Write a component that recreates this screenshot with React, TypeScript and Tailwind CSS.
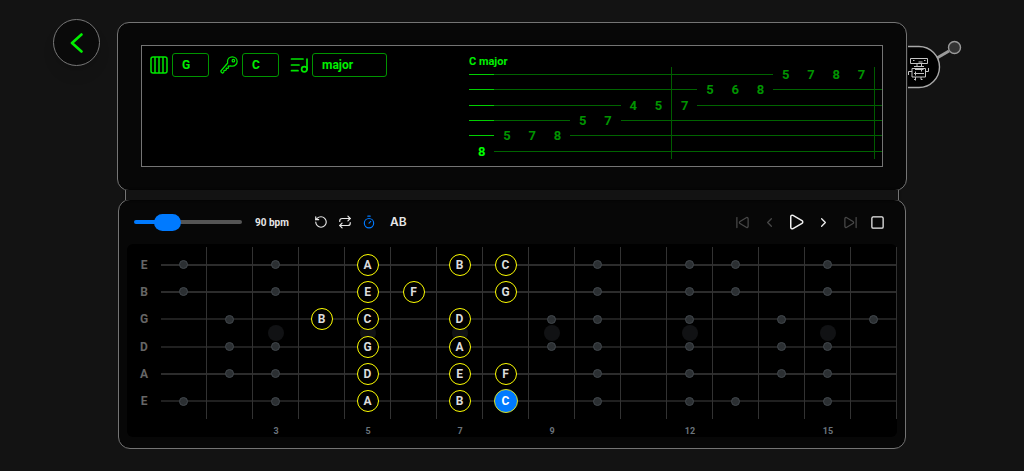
import React, { useState } from 'react';
import {
  ChevronLeft,
  ChevronRight,
  Play,
  Repeat,
  RotateCcw,
  SkipBack,
  SkipForward,
  Square,
  Timer,
} from 'lucide-react';
import { IoKeyOutline } from 'react-icons/io5';

interface GuitarString {
  id: string;
  name: string;
  line: string;
  dots: number[];
  notes: Record<number, string>;
}

const STRINGS: GuitarString[] = [
  { id: 'e1', name: 'E', line: 'h-0.5 bg-[#2c2c2c]', dots: [1, 3, 10, 12, 13, 15], notes: { 5: 'A', 7: 'B', 8: 'C' } },
  { id: 'b2', name: 'B', line: 'h-0.5 bg-[#2c2c2c]', dots: [1, 3, 10, 12, 13, 15], notes: { 5: 'E', 6: 'F', 8: 'G' } },
  { id: 'g3', name: 'G', line: 'h-px bg-[#404040]', dots: [2, 9, 10, 12, 14, 16], notes: { 4: 'B', 5: 'C', 7: 'D' } },
  { id: 'd4', name: 'D', line: 'h-px bg-[#404040]', dots: [2, 3, 9, 10, 12, 14, 15], notes: { 5: 'G', 7: 'A' } },
  { id: 'a5', name: 'A', line: 'h-0.5 bg-[#2c2c2c]', dots: [2, 3, 10, 12, 14, 15], notes: { 5: 'D', 7: 'E', 8: 'F' } },
  { id: 'e6', name: 'E', line: 'h-px bg-[#404040]', dots: [1, 3, 10, 12, 13, 15], notes: { 5: 'A', 7: 'B', 8: 'C' } },
];

const FRETS = Array.from({ length: 16 }, (_, i) => i + 1);
const INLAYS = [3, 5, 7, 9, 12, 15];

// [string row, fret] per step, eight steps to a measure
const MEASURES: [number, number][][] = [
  [[5, 8], [4, 5], [4, 7], [4, 8], [3, 5], [3, 7], [2, 4], [2, 5]],
  [[2, 7], [1, 5], [1, 6], [1, 8], [0, 5], [0, 7], [0, 8], [0, 7]],
];

const ACTIVE = { string: 'e6', fret: 8 };

function FretsIcon() {
  return (
    <svg viewBox="0 0 18 18" className="size-[18px]" fill="none" stroke="currentColor" strokeWidth="1.5">
      <rect x="1" y="1" width="16" height="16" rx="2" />
      <path d="M5 1v16M9 1v16M13 1v16" />
    </svg>
  );
}

function ScaleIcon() {
  return (
    <svg viewBox="0 0 18 18" className="size-[18px]" fill="none" stroke="currentColor" strokeWidth="1.7" strokeLinecap="round" strokeLinejoin="round">
      <path d="M1.5 3h11.5M1.5 9h7.5M1.5 14.7h6.5M17 3v10.3" />
      <ellipse cx="14.3" cy="13.2" rx="2.7" ry="2.6" />
    </svg>
  );
}

function Lever() {
  return (
    <svg viewBox="0 0 58 54" className="mt-[38px] h-[54px] w-[58px]" fill="none" aria-hidden="true">
      <path d="M30 20L42 13" stroke="#9a9a9a" strokeWidth="3" />
      <circle cx="47.5" cy="9.5" r="6" fill="#333" stroke="#9a9a9a" strokeWidth="1.4" />
      <path d="M1 8.5h11a20.5 20.5 0 0 1 0 41H1" fill="#000" stroke="#a8a8a8" strokeWidth="1.4" />
      <g stroke="#c4c4c4" strokeWidth="1">
        <path d="M3.5 20.5h17v5h-17zM6 22.5h1.5M17 22.5h1.5M11.5 24h4" />
        <path d="M10 25.5v3M14.5 25.5v3M7 28.5h10" />
        <path d="M5 30.5h13.5v8.5H5zM8 31.5h8.5M14.5 30.5v3M7 35.5h10M8.5 33.5v4" />
        <path d="M5 33.5H1.5v3.5M18.5 33.5h3v-3.5M8.5 39v3.5M8.5 41.5H7M14 39v2.5h1.5" />
      </g>
    </svg>
  );
}

interface PickerProps {
  id: string;
  label: string;
  icon: React.ReactNode;
  options: string[];
  value: string;
  onChange: (value: string) => void;
  width: string;
}

function Picker({ id, label, icon, options, value, onChange, width }: PickerProps) {
  return (
    <div className="flex items-center gap-1">
      <label htmlFor={id} aria-label={label}>
        {icon}
      </label>
      <select
        id={id}
        value={value}
        onChange={e => onChange(e.target.value)}
        className={`h-6 appearance-none rounded-[3px] border border-[#009400] bg-black pl-[9px] text-xs font-bold text-[#00f000] outline-none ${width}`}
      >
        {options.map(option => (
          <option key={option}>{option}</option>
        ))}
      </select>
    </div>
  );
}

function Tablature({ title }: { title: string }) {
  return (
    <div className="min-w-0 flex-1 overflow-hidden pt-2">
      <div className="h-[13px] text-[11px] leading-[15px] font-bold text-[#00f000]">{title}</div>
      <div className="flex">
        {MEASURES.map((steps, m) => (
          <div key={m} className="grid h-[92px] w-[203px] shrink-0 grid-cols-8 border-r border-[#005c00]">
            {steps.map(([row, fret], step) => {
              const current = m === 0 && step === 0;
              return (
                <div key={step} className="grid grid-rows-6">
                  {STRINGS.map((string, i) => (
                    <div key={string.id} className="flex min-h-0 items-center justify-center">
                      {i === row ? (
                        <span className={`text-[13px] leading-none font-bold ${current ? 'text-[#00ff00]' : 'text-[#009400]'}`}>
                          {fret}
                        </span>
                      ) : (
                        <span className={current ? 'h-px w-full bg-[#00d000]' : 'h-px w-full bg-[#006400]'} />
                      )}
                    </div>
                  ))}
                </div>
              );
            })}
          </div>
        ))}
        <div className="grid flex-1 grid-rows-6">
          {STRINGS.map((string, i) => (
            <div key={string.id} className="flex items-center">
              {i > 0 && <span className="h-px w-full bg-[#006400]" />}
            </div>
          ))}
        </div>
      </div>
    </div>
  );
}

function FretCell({ string, fret }: { string: GuitarString; fret: number }) {
  const note = string.notes[fret];
  const active = string.id === ACTIVE.string && fret === ACTIVE.fret;

  return (
    <div className="relative flex min-h-0 items-center justify-center">
      <span className={`absolute inset-x-0 top-1/2 -translate-y-1/2 ${string.line}`} />
      {note && (
        <span
          className={`relative flex shrink-0 items-center justify-center rounded-full border text-xs font-bold ${
            active ? 'size-6 border-[#d8e020] bg-[#007aff] text-white' : 'size-[22px] border-[#ffff00] bg-black text-[#dcdcdc]'
          }`}
        >
          {note}
        </span>
      )}
      {string.dots.includes(fret) && (
        <span className="relative size-[9px] rounded-full border border-[#41474c] bg-[#2b2f32]" />
      )}
    </div>
  );
}

function Fretboard() {
  return (
    <div className="mx-2 rounded-md bg-black pt-[3px]">
      <div className="flex">
        <div className="grid w-[34px] shrink-0 grid-rows-6 py-1">
          {STRINGS.map(string => (
            <span key={string.id} className="flex items-center justify-center text-xs font-bold text-[#666]">
              {string.name}
            </span>
          ))}
        </div>
        <div className="grid h-[172px] flex-1 grid-cols-16">
          {FRETS.map(fret => (
            <div
              key={fret}
              className="relative grid grid-rows-6 border-r border-[#323232] py-1"
            >
              {INLAYS.includes(fret) && (
                <span className="absolute top-1/2 left-1/2 size-4 -translate-x-1/2 -translate-y-1/2 rounded-full bg-[#111214]" />
              )}
              {STRINGS.map(string => (
                <FretCell key={string.id} string={string} fret={fret} />
              ))}
            </div>
          ))}
        </div>
      </div>
      <div className="grid h-[18px] grid-cols-16 pt-[6px] pl-[34px] text-center text-[9px] leading-3 font-bold text-[#6b747c]">
        {FRETS.map(fret => (
          <span key={fret}>{INLAYS.includes(fret) ? fret : ''}</span>
        ))}
      </div>
    </div>
  );
}

function Transport() {
  const [bpm, setBpm] = useState(90);
  const [min, max] = [40, 240];
  const filled = 12 + ((bpm - min) / (max - min)) * 76;

  return (
    <div className="flex h-11 items-center justify-between pr-[19px] pl-[15px]">
      <div className="flex items-center">
        <input
          id="tempo"
          type="range"
          aria-label="Tempo"
          min={min}
          max={max}
          value={bpm}
          onChange={e => setBpm(Number(e.target.value))}
          style={{ backgroundImage: `linear-gradient(to right, #007aff ${filled}%, #555 ${filled}%)` }}
          className="h-1 w-[108px] appearance-none rounded-full outline-none [&::-webkit-slider-thumb]:h-[17px] [&::-webkit-slider-thumb]:w-[27px] [&::-webkit-slider-thumb]:appearance-none [&::-webkit-slider-thumb]:rounded-full [&::-webkit-slider-thumb]:bg-[#007aff]"
        />
        <label htmlFor="tempo" className="w-[67px] pl-[13px] text-[10px] font-bold whitespace-nowrap text-[#e6e6e6]">
          {bpm} bpm
        </label>
        <div className="flex items-center text-[#e6e6e6]">
          <button type="button" aria-label="Restart" className="p-[5px]"><RotateCcw size={14} /></button>
          <button type="button" aria-label="Repeat" className="p-[5px]"><Repeat size={14} /></button>
          <button type="button" aria-label="Metronome" className="p-[5px] text-[#007aff]"><Timer size={14} /></button>
          <button type="button" className="px-[9px] font-[Inter,sans-serif] text-xs font-semibold">AB</button>
        </div>
      </div>
      <div className="flex items-center gap-[9px] text-[#f0f0f0]">
        <button type="button" aria-label="First" className="flex size-[18px] items-center justify-center text-[#484848]"><SkipBack size={15} /></button>
        <button type="button" aria-label="Previous" className="flex size-[18px] items-center justify-center text-[#484848]"><ChevronLeft size={15} /></button>
        <button type="button" aria-label="Play"><Play size={18} /></button>
        <button type="button" aria-label="Next" className="flex size-[18px] items-center justify-center"><ChevronRight size={15} /></button>
        <button type="button" aria-label="Last" className="flex size-[18px] items-center justify-center text-[#484848]"><SkipForward size={15} /></button>
        <button type="button" aria-label="Stop" className="flex size-[18px] items-center justify-center"><Square size={15} /></button>
      </div>
    </div>
  );
}

export default function App() {
  const [shape, setShape] = useState('G');
  const [root, setRoot] = useState('C');
  const [scale, setScale] = useState('major');

  return (
    <div className="grid min-h-screen grid-cols-[1fr_minmax(0,790px)_1fr] items-start bg-[#131313] font-[Roboto,sans-serif]">
      <div className="flex justify-end pt-[19px] pr-[17px]">
        <button
          type="button"
          aria-label="Back"
          className="flex size-[47px] items-center justify-center rounded-full border border-[#777] bg-[#0a0a0a] text-[#00f000] shadow-lg"
        >
          <svg viewBox="0 0 14 20" className="h-5 w-3.5" fill="none" stroke="currentColor" strokeWidth="2.6" strokeLinecap="round" strokeLinejoin="round">
            <path d="M11.5 1.5L2 10l9.5 8.5" />
          </svg>
        </button>
      </div>

      <main className="pt-[22px]">
        <section className="rounded-xl border border-[#747474] bg-[#070707] px-[23px] pt-[22px] pb-[23px]">
          <div className="flex h-[122px] border border-[#747474] bg-black">
            <div className="flex w-[327px] shrink-0 items-start gap-[11px] pt-[7px] pl-2 text-[#00e600]">
              <Picker id="shape" label="Shape" icon={<FretsIcon />} options={['C', 'A', 'G', 'E', 'D']} value={shape} onChange={setShape} width="w-[37px]" />
              <Picker id="root" label="Key" icon={<IoKeyOutline size={20} className="-mx-px stroke-[12]" />} options={['C', 'D', 'E', 'F', 'G', 'A', 'B']} value={root} onChange={setRoot} width="w-[37px]" />
              <Picker id="scale" label="Scale" icon={<ScaleIcon />} options={['major', 'minor', 'dorian']} value={scale} onChange={setScale} width="w-[75px]" />
            </div>
            <Tablature title={`${root} ${scale}`} />
          </div>
        </section>

        {/* hinge */}
        <div className="relative z-10 mx-2 -my-px h-2.5 border-x border-[#747474] bg-[#131313] shadow-[0_0_2px_#000]" />

        <section className="mx-px rounded-xl border border-[#747474] bg-[#070707] pb-[11px]">
          <Transport />
          <Fretboard />
        </section>
      </main>

      <Lever />
    </div>
  );
}
